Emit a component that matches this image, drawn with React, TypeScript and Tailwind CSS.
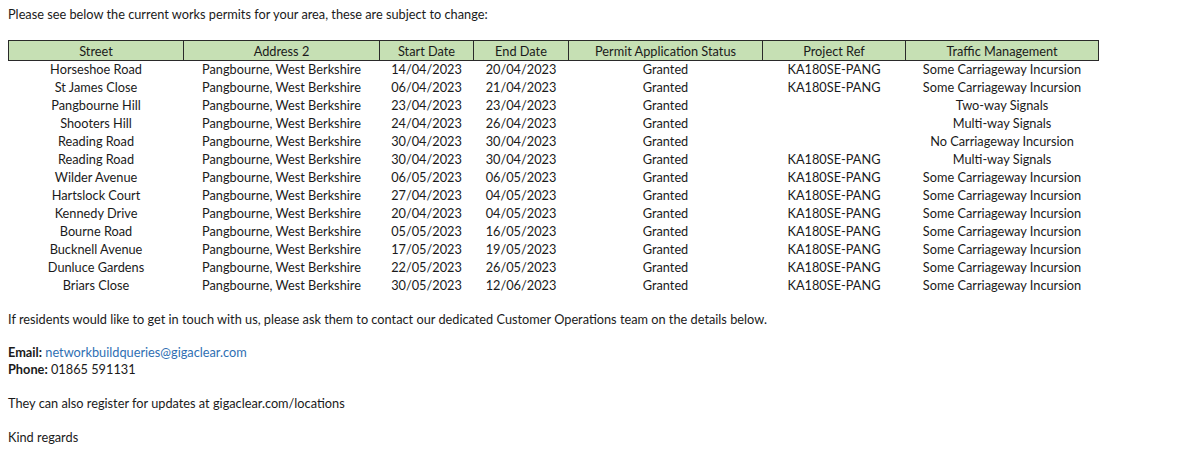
import React from "react";

const rows = [
  ["Horseshoe Road", "14/04/2023", "20/04/2023", "KA180SE-PANG", "Some Carriageway Incursion"],
  ["St James Close", "06/04/2023", "21/04/2023", "KA180SE-PANG", "Some Carriageway Incursion"],
  ["Pangbourne Hill", "23/04/2023", "23/04/2023", "", "Two-way Signals"],
  ["Shooters Hill", "24/04/2023", "26/04/2023", "", "Multi-way Signals"],
  ["Reading Road", "30/04/2023", "30/04/2023", "", "No Carriageway Incursion"],
  ["Reading Road", "30/04/2023", "30/04/2023", "KA180SE-PANG", "Multi-way Signals"],
  ["Wilder Avenue", "06/05/2023", "06/05/2023", "KA180SE-PANG", "Some Carriageway Incursion"],
  ["Hartslock Court", "27/04/2023", "04/05/2023", "KA180SE-PANG", "Some Carriageway Incursion"],
  ["Kennedy Drive", "20/04/2023", "04/05/2023", "KA180SE-PANG", "Some Carriageway Incursion"],
  ["Bourne Road", "05/05/2023", "16/05/2023", "KA180SE-PANG", "Some Carriageway Incursion"],
  ["Bucknell Avenue", "17/05/2023", "19/05/2023", "KA180SE-PANG", "Some Carriageway Incursion"],
  ["Dunluce Gardens", "22/05/2023", "26/05/2023", "KA180SE-PANG", "Some Carriageway Incursion"],
  ["Briars Close", "30/05/2023", "12/06/2023", "KA180SE-PANG", "Some Carriageway Incursion"],
];

const headers = [
  "Street",
  "Address 2",
  "Start Date",
  "End Date",
  "Permit Application Status",
  "Project Ref",
  "Traffic Management",
];

const widths = [175, 196, 94, 95, 194, 143, 193];

export default function App() {
  return (
    <div
      className="w-[1200px] h-[458px] bg-white text-[#1a1a1a] text-[12.75px] leading-[17px] pl-[8px] pt-[6px]"
      style={{ fontFamily: "Lato, 'Open Sans', sans-serif" }}
    >
      <p className="h-[17px]">
        Please see below the current works permits for your area, these are subject to change:
      </p>
      <table className="mt-[17px] table-fixed border-collapse w-[1090px]">
        <colgroup>
          {widths.map((w, i) => (
            <col key={i} style={{ width: w }} />
          ))}
        </colgroup>
        <thead>
          <tr className="h-[20px] bg-[#c6e0b4]">
            {headers.map((h) => (
              <th
                key={h}
                className="border-[1.5px] border-[#2a2a2a] font-normal text-center p-0 leading-[16px]"
              >
                {h}
              </th>
            ))}
          </tr>
        </thead>
        <tbody>
          {rows.map((r, i) => (
            <tr key={i} className="h-[18px]">
              <td className="text-center p-0">{r[0]}</td>
              <td className="text-center p-0">Pangbourne, West Berkshire</td>
              <td className="text-center p-0">{r[1]}</td>
              <td className="text-center p-0">{r[2]}</td>
              <td className="text-center p-0">Granted</td>
              <td className="text-center p-0">{r[3]}</td>
              <td className="text-center p-0">{r[4]}</td>
            </tr>
          ))}
        </tbody>
      </table>
      <p className="mt-[16px]">
        If residents would like to get in touch with us, please ask them to contact our dedicated Customer Operations team on the details below.
      </p>
      <p className="mt-[16px]">
        <span className="font-bold">Email:</span>{" "}
        <span className="text-[#2f6fb3]">networkbuildqueries@gigaclear.com</span>
      </p>
      <p>
        <span className="font-bold">Phone:</span> 01865 591131
      </p>
      <p className="mt-[17px]">They can also register for updates at gigaclear.com/locations</p>
      <p className="mt-[17px]">Kind regards</p>
    </div>
  );
}
